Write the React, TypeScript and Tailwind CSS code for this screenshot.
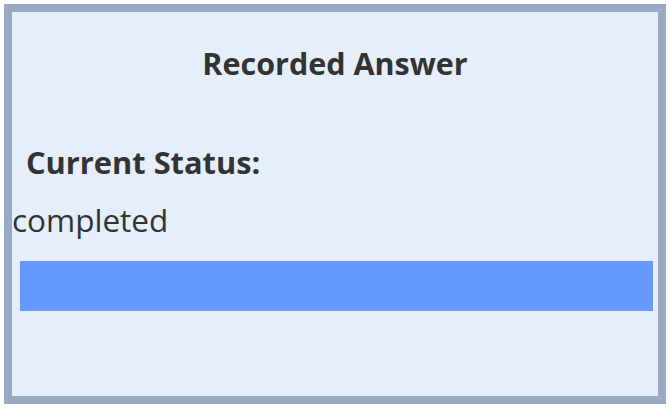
export default function App() {
  return (
    <div className="w-[670px] h-[409px] bg-white pt-[4px] pl-[4px] font-['Open_Sans',sans-serif] text-[#333333]">
      <div className="w-[662px] h-[400px] border-8 border-[#99aac2] bg-[#e6eef9] flex flex-col">
        <h2 className="mt-[31px] text-center text-[30.5px] leading-[40px] font-bold">Recorded Answer</h2>
        <h3 className="mt-[59px] ml-[14px] text-[30.8px] leading-[40px] font-bold">Current Status:</h3>
        <p className="mt-[17px] text-[31.5px] leading-[42px]">completed</p>
        <div className="mt-[20px] ml-[8px] w-[633px] h-[50px] bg-[#6699ff]" />
      </div>
    </div>
  );
}
